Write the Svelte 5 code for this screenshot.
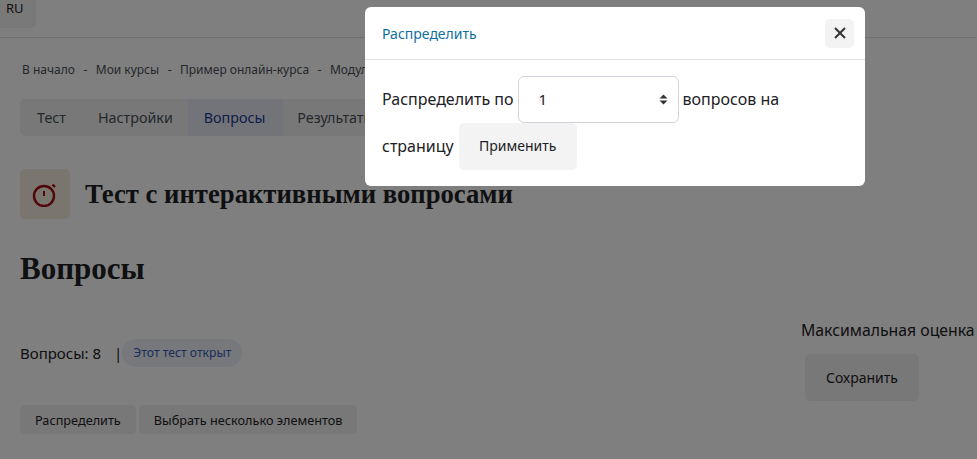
<script>
  const crumbs = ['В начало', 'Мои курсы', 'Пример онлайн-курса', 'Модуль 1'];
  const tabs = ['Тест', 'Настройки', 'Вопросы', 'Результаты'];
</script>

<div class="page">
  <header class="top"><span class="lang">RU</span></header>
  <nav class="crumbs">
    {#each crumbs as c, i}
      {#if i > 0}<span class="sep">-</span>{/if}<span>{c}</span>
    {/each}
  </nav>
  <div class="tabs">
    {#each tabs as t}
      <span class="tab" class:active={t === 'Вопросы'}>{t}</span>
    {/each}
  </div>
  <div class="title">
    <span class="icon">
      <svg width="26" height="26" viewBox="0 0 26 26" fill="none" stroke="#a00f0f" stroke-width="2.4">
        <circle cx="12" cy="15" r="10" />
        <path d="M12 15V10" stroke-width="2" />
        <path d="M20.5 3.5l2.5 2.5" />
      </svg>
    </span>
    <h1>Тест с интерактивными вопросами</h1>
  </div>
  <h2>Вопросы</h2>
  <div class="stats">
    <div class="count">
      <span>Вопросы: 8</span><span class="bar">|</span><span class="badge">Этот тест открыт</span>
    </div>
    <div class="grade">
      <span>Максимальная оценка</span>
      <button class="save">Сохранить</button>
    </div>
  </div>
  <div class="actions">
    <button>Распределить</button>
    <button>Выбрать несколько элементов</button>
  </div>
</div>

<div class="backdrop">
  <div class="modal">
    <div class="head">
      <span class="mtitle">Распределить</span>
      <button class="close" aria-label="Закрыть">
        <svg width="12" height="12" viewBox="0 0 12 12" stroke="#333" stroke-width="2" fill="none"><path d="M1 1l10 10M11 1L1 11" /></svg>
      </button>
    </div>
    <div class="body">
      <span class="t">Распределить по</span>
      <span class="select"><span class="t">1</span>
        <svg width="9" height="11" viewBox="0 0 9 11" fill="#333"><path d="M4.5 0.5L8.5 4.5H0.5zM0.5 6.5H8.5L4.5 10.5z" /></svg>
      </span>
      <span class="t">вопросов на</span>
      <span class="t">страницу</span>
      <button class="apply">Применить</button>
    </div>
  </div>
</div>

<style>
  :global(body) {
    margin: 0;
    background: #fff;
    font-family: "Noto Sans", "Open Sans", sans-serif;
    overflow: hidden;
  }
  .page {
    height: 459px;
    overflow: hidden;
    color: #1d2125;
    font-size: 15px;
  }
  .top {
    height: 37px;
    border-bottom: 1px solid #dee2e6;
  }
  .lang {
    display: block;
    width: 36px;
    height: 28px;
    padding: 0 0 0 6px;
    box-sizing: border-box;
    background: #f2f2f2;
    border-radius: 0 0 5px 0;
    font-size: 13px;
    line-height: 17px;
  }
  .crumbs {
    display: flex;
    padding: 23px 0 0 22px;
    font-size: 12px;
    line-height: 17px;
    color: #495057;
    white-space: nowrap;
  }
  .sep { margin: 0 8.5px; }
  .tabs {
    display: flex;
    margin: 21px 0 0 20px;
    width: 700px;
    height: 37px;
    background: #f0f0f0;
    border-radius: 5px;
    overflow: hidden;
  }
  .tab {
    padding: 0 16px;
    line-height: 37px;
    font-size: 14.3px;
    color: #495057;
  }
  .tab:first-child { padding-left: 17px; }
  .tab:nth-child(2) { padding-right: 15px; }
  .tab:nth-child(4) { padding-left: 14px; }
  .tab.active { padding-right: 18px; background: #e6e9f3; color: #1a3a8f; }
  .title {
    display: flex;
    align-items: center;
    gap: 15px;
    margin: 33px 0 0 20px;
  }
  .icon {
    display: flex;
    align-items: center;
    justify-content: center;
    width: 50px;
    height: 50px;
    background: #f7ebdf;
    border-radius: 5px;
  }
  h1 {
    margin: 0;
    font: 700 26.7px "Liberation Serif", serif;
  }
  h2 {
    margin: 30px 0 0 20px;
    font: 700 31px "Liberation Serif", serif;
    line-height: 40px;
  }
  .stats {
    display: flex;
    justify-content: space-between;
    margin-top: 31px;
    padding-left: 20px;
  }
  .count {
    display: flex;
    align-items: center;
    height: 30px;
    margin-top: 18px;
    white-space: nowrap;
  }
  .bar { margin-left: 13px; }
  .badge {
    padding: 0 11px;
    line-height: 28px;
    font-size: 12.2px;
    color: #3a5bb5;
    background: #ecf1f6;
    border-radius: 14px;
  }
  .grade {
    display: flex;
    flex-direction: column;
    align-items: flex-start;
    gap: 14px;
    width: 176px;
    font-size: 15.8px;
    line-height: 20px;
    white-space: nowrap;
  }
  button {
    border: 0;
    font: inherit;
    color: #1d2125;
    background: #f0f0f0;
    border-radius: 5px;
  }
  .save {
    width: 114px;
    height: 47px;
    margin-left: 4px;
    font-size: 14px;
  }
  .actions {
    display: flex;
    gap: 3px;
    margin: 4px 0 0 20px;
  }
  .actions button {
    height: 29px;
    padding: 0 15px;
    font-size: 12.7px;
  }
  .backdrop {
    position: fixed;
    inset: 0;
    background: rgba(0, 0, 0, 0.5);
  }
  .modal {
    position: absolute;
    left: 365px;
    top: 7px;
    width: 500px;
    height: 179px;
    box-sizing: border-box;
    background: #fff;
    border-radius: 6px;
    color: #1d2125;
  }
  .head {
    display: flex;
    align-items: center;
    justify-content: space-between;
    height: 52px;
    padding: 0 11px 0 17px;
    border-bottom: 1px solid #dee2e6;
  }
  .mtitle { color: #0f6f9f; font-size: 14px; }
  .close {
    display: flex;
    align-items: center;
    justify-content: center;
    width: 29px;
    height: 29px;
    padding: 0;
    background: #f3f3f3;
  }
  .body {
    display: flex;
    flex-wrap: wrap;
    align-items: center;
    column-gap: 4px;
    padding: 16px 17px 0;
    font-size: 16px;
  }
  .t { padding-bottom: 2px; }
  .select {
    display: flex;
    align-items: center;
    justify-content: space-between;
    width: 161px;
    height: 47px;
    box-sizing: border-box;
    padding: 0 10px 0 20px;
    border: 1px solid #ced4da;
    border-radius: 6px;
    font-size: 15px;
  }
  .apply {
    width: 118px;
    height: 47px;
    margin-left: 1px;
    padding: 0 0 2px;
    background: #f3f3f3;
    font-size: 14px;
  }
</style>
